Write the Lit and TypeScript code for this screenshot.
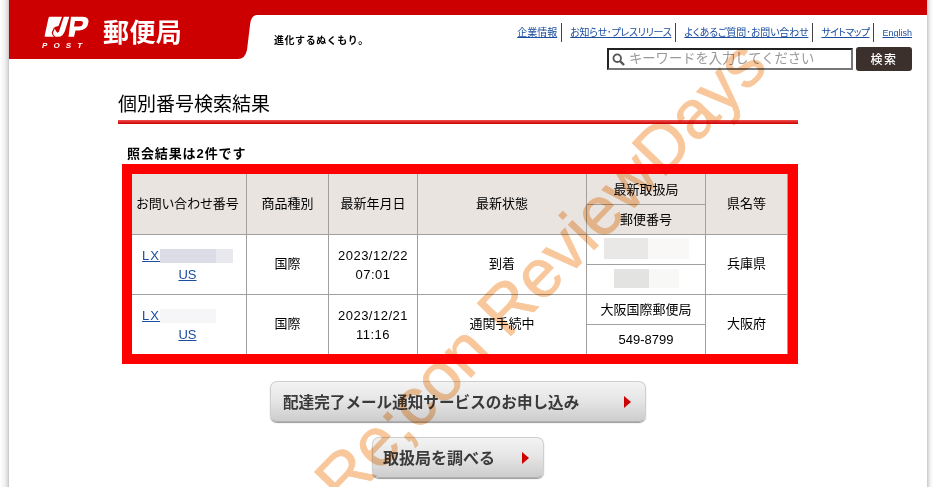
import { LitElement, html, css } from "lit";
import { customElement } from "lit/decorators.js";

const links: [string, number, number][] = [
  ["企業情報", 10, 0],
  ["お知らせ･プレスリリース", 10, -0.27],
  ["よくあるご質問･お問い合わせ", 10, -0.2],
  ["サイトマップ", 10, -0.65],
  ["English", 9, 0],
];

@customElement("app-root")
export class AppRoot extends LitElement {
  static styles = css`
    :host { display: block; width: 933px; height: 487px; overflow: hidden; position: relative; background: #fff;
      font-family: "Liberation Sans", "Noto Sans CJK JP", sans-serif; color: #000; }
    .shell { display: flex; height: 487px; }
    .gl { width: 9px; flex: none; background: linear-gradient(90deg, #fff 0, #f4f4f4 4px, #e2e2e2 7px, #c4c4c4 9px); }
    .gr { width: 6px; flex: none; background: linear-gradient(90deg, #c8c8c8 0, #e4e4e4 2px, #f6f6f6 4px, #fff 6px); }
    .page { flex: 1; min-width: 0; }
    .header { display: flex; height: 59px; }
    .brand { position: relative; width: 258px; height: 59px; flex: none; color: #fff; }
    .brand-bg { position: absolute; inset: 0; }
    .brand-in { position: relative; display: flex; padding: 16px 0 0 35px; }
    .mark { display: flex; flex-direction: column; width: 46px; }
    .post { font-size: 8px; line-height: 9px; font-weight: 700; font-style: italic; letter-spacing: 6.1px; margin: 3px 0 0 -2px; white-space: nowrap; }
    .name { font-family: "Noto Sans CJK JP", sans-serif; font-size: 26px; line-height: 30px; font-weight: 700; margin: 0 0 0 13px; letter-spacing: .4px; white-space: nowrap; }
    .head-r { flex: 1; display: flex; border-top: 15px solid #c00; }
    .tag { font-family: "Noto Sans CJK JP", sans-serif; font-size: 10px; font-weight: 700; line-height: 14px; letter-spacing: .55px; margin: 18px 0 0 7px; white-space: nowrap; }
    .tools { flex: 1; display: flex; flex-direction: column; align-items: flex-end; padding: 8px 15px 0 0; }
    .links { display: flex; height: 19px; align-items: stretch; }
    .links a { box-sizing: border-box; height: 19px; padding: 1px 4px 0 8px; line-height: 18px; color: #1c4ea0; text-decoration: underline; font-feature-settings: "palt"; white-space: nowrap; border-left: 1px solid #444; }
    .links a:first-child { border-left: 0; }
    .links a:last-child { padding-right: 0; }
    .search { display: flex; gap: 3px; margin-top: 5px; }
    .box { box-sizing: border-box; width: 246px; height: 22px; margin-top: 1px; border: 2px solid #222; border-right-color: #777; border-bottom-color: #777; display: flex; align-items: center; gap: 4px; padding-left: 3px; }
    .ph { font-family: "Noto Sans CJK JP", sans-serif; font-size: 13.3px; line-height: 16px; padding-bottom: 2px; color: #999; white-space: nowrap; }
    .btn-s { box-sizing: border-box; width: 56px; height: 24px; background: #3b302c; border-radius: 3px; color: #fff; font-size: 12px; font-weight: 500; line-height: 24px; text-align: center; letter-spacing: 1.5px; font-family: "Noto Sans CJK JP", sans-serif; }
    .content { padding: 30px 0 0 109px; width: 680px; }
    h1 { margin: 0; font-family: "Noto Sans CJK JP", sans-serif; font-size: 19px; line-height: 28px; font-weight: 400; white-space: nowrap; }
    .rule { height: 4px; margin-top: 3px; background: linear-gradient(#f05050, #cc0000); }
    .count { margin: 20px 0 0 9px; font-size: 13px; line-height: 19px; font-weight: 700; letter-spacing: .9px; height: 20px; white-space: nowrap; }
    .frame { box-sizing: border-box; width: 676px; margin-left: 4px; border: 10px solid #f00; }
    table { border-collapse: separate; border-spacing: 0; table-layout: fixed; width: 656px; font-size: 13px; }
    tr { height: 30px; }
    tr.top { height: 31px; }
    tr.last { height: 29px; }
    th, td { box-sizing: border-box; padding: 0; text-align: center; font-weight: 400; border-right: 1px solid #a0a0a0; border-bottom: 1px solid #a0a0a0; line-height: 19px; font-feature-settings: "palt"; white-space: nowrap; }
    th { background: #e9e4e0; }
    tr.last td, td.end { border-bottom: 0; }
    .num { padding-right: 3px; }
    .mid { padding-bottom: 2px; }
    .date { letter-spacing: .5px; }
    a.l { color: #1c4ea0; text-decoration: underline; }
    .lx { letter-spacing: 1px; }
    .bl { display: inline-flex; vertical-align: -3px; }
    .bl i { display: block; height: 100%; }
    .actions { display: flex; flex-direction: column; align-items: center; gap: 15px; margin: 17px 0 0 0; width: 680px; }
    .btn { box-sizing: border-box; height: 41px; display: flex; align-items: center; justify-content: space-between; border: 1px solid #cfcfcf; border-bottom-color: #b0b0b0; border-radius: 7px; background: linear-gradient(#f3f3f3, #e6e6e6 45%, #cdcdcd); box-shadow: 0 1px 1px #999; color: #3a3a3a; font-family: "Noto Sans CJK JP", sans-serif; font-weight: 700; white-space: nowrap; }
    .btn span:first-child { padding-bottom: 2px; }
    .b1 { width: 376px; font-size: 15.6px; padding: 0 14px 0 12px; }
    .b2 { width: 172px; font-size: 16px; padding: 0 14px 0 10px; }
    .arrow { width: 0; height: 0; border-left: 7px solid #c00; border-top: 6px solid transparent; border-bottom: 6px solid transparent; }
    .wm { position: absolute; left: 319px; top: 481px; transform: rotate(-46deg); transform-origin: 0 100%; font-size: 68px; line-height: 68px; color: #f8c89c; -webkit-text-stroke: .8px #f8c89c; mix-blend-mode: multiply; white-space: pre; pointer-events: none; font-family: "Liberation Sans", sans-serif; }
    .wm-e { margin-right: -10px; }
  `;

  private blur(segs: [number, string][], h: number) {
    return html`<span class="bl" style="height:${h}px">${segs.map(([w, c]) => html`<i style="width:${w}px;background:${c}"></i>`)}</span>`;
  }

  render() {
    return html`
      <div class="shell">
        <div class="gl"></div>
        <div class="page">
          <header class="header">
            <div class="brand">
              <svg class="brand-bg" width="258" height="59" viewBox="0 0 258 59"><path fill="#c00" d="M0 0H258V15H248Q242 15 241 25L238 50Q236 59 229 59H0Z"/></svg>
              <div class="brand-in">
                <div class="mark">
                  <svg width="46" height="22" viewBox="0 0 46 22" fill="#fff" fill-rule="evenodd">
                    <path d="M6 .7H18L14.500 10Q10.800 10.500 9.700 12L7.700 16.500Q8 19 10 20.700H1.500Q.4 20.700 .7 19.500L4.500 2Q4.800 .7 6 .7Z"/>
                    <path d="M19.800 .7H25.300L21 14.700Q19 20.700 14.300 20.700H11.500Q9 19 9 16.700L10.700 12.800Q12 15.500 13.300 16.700Q15 16.700 15.500 14Z"/>
                    <path d="M27 .7H38Q45 .7 44.500 6Q43.500 14 35 14.500H31.500L30 20.700H24.500ZM31 5L30 10.500H35Q38.500 10.500 39 7Q39 5 37 5Z"/>
                  </svg>
                  <span class="post">POST</span>
                </div>
                <span class="name">郵便局</span>
              </div>
            </div>
            <div class="head-r">
              <div class="tag">進化するぬくもり。</div>
              <div class="tools">
                <nav class="links">${links.map(([t, s, ls]) => html`<a style="font-size:${s}px;letter-spacing:${ls}px">${t}</a>`)}</nav>
                <div class="search">
                  <div class="box">
                    <svg width="13" height="13" viewBox="0 0 13 13" fill="none" stroke="#555"><circle cx="5.200" cy="5.200" r="3.800" stroke-width="1.800"/><path d="M8 8l4 4" stroke-width="2.400"/></svg>
                    <span class="ph">キーワードを入力してください</span>
                  </div>
                  <div class="btn-s">検索</div>
                </div>
              </div>
            </div>
          </header>
          <main class="content">
            <h1>個別番号検索結果</h1>
            <div class="rule"></div>
            <div class="count">照会結果は2件です</div>
            <div class="frame">
              <table>
                <colgroup><col style="width:115px"><col style="width:82px"><col style="width:89px"><col style="width:169px"><col style="width:119px"><col style="width:82px"></colgroup>
                <tr class="top"><th rowspan="2" class="num mid">お問い合わせ番号</th><th rowspan="2" class="mid">商品種別</th><th rowspan="2" class="mid">最新年月日</th><th rowspan="2" class="mid">最新状態</th><th>最新取扱局</th><th rowspan="2" class="mid">県名等</th></tr>
                <tr><th>郵便番号</th></tr>
                <tr><td rowspan="2" class="num"><a class="l"><span class="lx">LX</span>${this.blur([[56, "#dcdce6"], [17, "#e8e8ee"]], 14)}</a><br><a class="l">US</a></td><td rowspan="2" class="mid">国際</td><td rowspan="2" class="date">2023/12/22<br>07:01</td><td rowspan="2" class="mid">到着</td><td>${this.blur([[44, "#e9e8e6"], [41, "#f9f8f6"]], 21)}</td><td rowspan="2" class="mid">兵庫県</td></tr>
                <tr><td>${this.blur([[35, "#e3e3e1"], [30, "#f8f8f6"]], 19)}</td></tr>
                <tr><td rowspan="2" class="end num"><a class="l"><span class="lx">LX</span>${this.blur([[56, "#f6f6f9"], [17, "#fff"]], 14)}</a><br><a class="l">US</a></td><td rowspan="2" class="end mid">国際</td><td rowspan="2" class="end date">2023/12/21<br>11:16</td><td rowspan="2" class="end mid">通関手続中</td><td>大阪国際郵便局</td><td rowspan="2" class="end mid">大阪府</td></tr>
                <tr class="last"><td>549-8799</td></tr>
              </table>
            </div>
            <div class="actions">
              <div class="btn b1"><span>配達完了メール通知サービスのお申し込み</span><span class="arrow"></span></div>
              <div class="btn b2"><span>取扱局を調べる</span><span class="arrow"></span></div>
            </div>
          </main>
        </div>
        <div class="gr"></div>
      </div>
      <div class="wm"><span class="wm-e">e</span> Re;con ReviewDays</div>
    `;
  }
}
